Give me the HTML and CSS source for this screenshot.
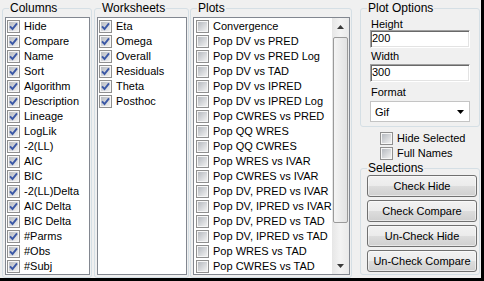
FILE: index.html
```html
<!DOCTYPE html>
<html>
<head>
<meta charset="utf-8">
<link rel="stylesheet" href="styles.css">
</head>
<body>
<div class="window">
  <div class="group col-group g-columns">
    <div class="gtitle">Columns</div>
    <div class="list">
      <div class="row"><span class="cb"><svg viewBox="0 0 9 9"><path d="M1 4.3 L3.5 7 L8 1.3"/></svg></span>Hide</div>
      <div class="row"><span class="cb"><svg viewBox="0 0 9 9"><path d="M1 4.3 L3.5 7 L8 1.3"/></svg></span>Compare</div>
      <div class="row"><span class="cb"><svg viewBox="0 0 9 9"><path d="M1 4.3 L3.5 7 L8 1.3"/></svg></span>Name</div>
      <div class="row"><span class="cb"><svg viewBox="0 0 9 9"><path d="M1 4.3 L3.5 7 L8 1.3"/></svg></span>Sort</div>
      <div class="row"><span class="cb"><svg viewBox="0 0 9 9"><path d="M1 4.3 L3.5 7 L8 1.3"/></svg></span>Algorithm</div>
      <div class="row"><span class="cb"><svg viewBox="0 0 9 9"><path d="M1 4.3 L3.5 7 L8 1.3"/></svg></span>Description</div>
      <div class="row"><span class="cb"><svg viewBox="0 0 9 9"><path d="M1 4.3 L3.5 7 L8 1.3"/></svg></span>Lineage</div>
      <div class="row"><span class="cb"><svg viewBox="0 0 9 9"><path d="M1 4.3 L3.5 7 L8 1.3"/></svg></span>LogLik</div>
      <div class="row"><span class="cb"><svg viewBox="0 0 9 9"><path d="M1 4.3 L3.5 7 L8 1.3"/></svg></span>-2(LL)</div>
      <div class="row"><span class="cb"><svg viewBox="0 0 9 9"><path d="M1 4.3 L3.5 7 L8 1.3"/></svg></span>AIC</div>
      <div class="row"><span class="cb"><svg viewBox="0 0 9 9"><path d="M1 4.3 L3.5 7 L8 1.3"/></svg></span>BIC</div>
      <div class="row"><span class="cb"><svg viewBox="0 0 9 9"><path d="M1 4.3 L3.5 7 L8 1.3"/></svg></span>-2(LL)Delta</div>
      <div class="row"><span class="cb"><svg viewBox="0 0 9 9"><path d="M1 4.3 L3.5 7 L8 1.3"/></svg></span>AIC Delta</div>
      <div class="row"><span class="cb"><svg viewBox="0 0 9 9"><path d="M1 4.3 L3.5 7 L8 1.3"/></svg></span>BIC Delta</div>
      <div class="row"><span class="cb"><svg viewBox="0 0 9 9"><path d="M1 4.3 L3.5 7 L8 1.3"/></svg></span>#Parms</div>
      <div class="row"><span class="cb"><svg viewBox="0 0 9 9"><path d="M1 4.3 L3.5 7 L8 1.3"/></svg></span>#Obs</div>
      <div class="row"><span class="cb"><svg viewBox="0 0 9 9"><path d="M1 4.3 L3.5 7 L8 1.3"/></svg></span>#Subj</div>
    </div>
  </div>

  <div class="group col-group g-ws">
    <div class="gtitle">Worksheets</div>
    <div class="list">
      <div class="row"><span class="cb"><svg viewBox="0 0 9 9"><path d="M1 4.3 L3.5 7 L8 1.3"/></svg></span>Eta</div>
      <div class="row"><span class="cb"><svg viewBox="0 0 9 9"><path d="M1 4.3 L3.5 7 L8 1.3"/></svg></span>Omega</div>
      <div class="row"><span class="cb"><svg viewBox="0 0 9 9"><path d="M1 4.3 L3.5 7 L8 1.3"/></svg></span>Overall</div>
      <div class="row"><span class="cb"><svg viewBox="0 0 9 9"><path d="M1 4.3 L3.5 7 L8 1.3"/></svg></span>Residuals</div>
      <div class="row"><span class="cb"><svg viewBox="0 0 9 9"><path d="M1 4.3 L3.5 7 L8 1.3"/></svg></span>Theta</div>
      <div class="row"><span class="cb"><svg viewBox="0 0 9 9"><path d="M1 4.3 L3.5 7 L8 1.3"/></svg></span>Posthoc</div>
    </div>
  </div>

  <div class="group col-group g-plots">
    <div class="gtitle">Plots</div>
    <div class="list plots-list">
      <div class="items">
        <div class="row"><span class="cb"></span>Convergence</div>
        <div class="row"><span class="cb"></span>Pop DV vs PRED</div>
        <div class="row"><span class="cb"></span>Pop DV vs PRED Log</div>
        <div class="row"><span class="cb"></span>Pop DV vs TAD</div>
        <div class="row"><span class="cb"></span>Pop DV vs IPRED</div>
        <div class="row"><span class="cb"></span>Pop DV vs IPRED Log</div>
        <div class="row"><span class="cb"></span>Pop CWRES vs PRED</div>
        <div class="row"><span class="cb"></span>Pop QQ WRES</div>
        <div class="row"><span class="cb"></span>Pop QQ CWRES</div>
        <div class="row"><span class="cb"></span>Pop WRES vs IVAR</div>
        <div class="row"><span class="cb"></span>Pop CWRES vs IVAR</div>
        <div class="row"><span class="cb"></span>Pop DV, PRED vs IVAR</div>
        <div class="row"><span class="cb"></span>Pop DV, IPRED vs IVAR</div>
        <div class="row"><span class="cb"></span>Pop DV, PRED vs TAD</div>
        <div class="row"><span class="cb"></span>Pop DV, IPRED vs TAD</div>
        <div class="row"><span class="cb"></span>Pop WRES vs TAD</div>
        <div class="row"><span class="cb"></span>Pop CWRES vs TAD</div>
      </div>
      <div class="sb">
        <div class="sb-btn"><svg width="7" height="4" viewBox="0 0 7 4"><path d="M0 4 L3.5 0 L7 4z"/></svg></div>
        <div class="sb-track"><div class="thumb"></div></div>
        <div class="sb-btn"><svg width="7" height="4" viewBox="0 0 7 4"><path d="M0 0 L7 0 L3.5 4z"/></svg></div>
      </div>
    </div>
  </div>

  <div class="side">
    <div class="group g-opts">
      <div class="gtitle">Plot Options</div>
      <div class="lbl lbl-first">Height</div>
      <div class="tb">200</div>
      <div class="lbl lbl-width">Width</div>
      <div class="tb tb-second">300</div>
      <div class="lbl lbl-format">Format</div>
      <div class="dd"><span>Gif</span><svg width="7" height="4" viewBox="0 0 7 4"><path d="M0 0 L7 0 L3.5 4z"/></svg></div>
    </div>
    <div class="checks">
      <div class="row"><span class="cb"></span>Hide Selected</div>
      <div class="row"><span class="cb"></span>Full Names</div>
    </div>
    <div class="group g-sel">
      <div class="gtitle">Selections</div>
      <button class="btn">Check Hide</button>
      <button class="btn">Check Compare</button>
      <button class="btn">Un-Check Hide</button>
      <button class="btn">Un-Check Compare</button>
    </div>
  </div>
</div>
</body>
</html>
```

FILE: styles.css
```css
* { box-sizing: border-box; }

body {
  margin: 0;
  background: #f0f0f0;
  font-family: "Liberation Sans", Arial, sans-serif;
  font-size: 11px;
  color: #000;
}

.window {
  width: 484px;
  height: 281px;
  display: flex;
  align-items: flex-start;
  background: #f0f0f0;
  border-right: 3px solid #000;
  border-bottom: 3px solid #000;
}

.group {
  border: 1px solid #d5dfe5;
  border-radius: 3px;
  margin-top: 8px;
  display: flex;
  flex-direction: column;
}

.gtitle {
  align-self: flex-start;
  margin-top: -8px;
  padding: 0 1px;
  background: #f0f0f0;
  font-size: 12px;
  line-height: 14px;
  height: 14px;
  white-space: nowrap;
}

.col-group {
  height: 270px;
  padding: 0 1px 2px 2px;
}
.col-group .gtitle { margin-left: 4px; }

.g-columns { width: 90px; margin-left: 2px; }
.g-ws { width: 95px; margin-left: 2px; }
.g-plots { width: 162px; margin-left: 1px; }

.list {
  flex: 1;
  margin-top: 2px;
  background: #fff;
  border: 1px solid #828790;
  padding: 1px 0 0 1px;
  overflow: hidden;
}

.row {
  display: flex;
  height: 15px;
  line-height: 15px;
  white-space: nowrap;
}

.cb {
  flex: none;
  width: 13px;
  height: 13px;
  margin: 1px 4px 0 0;
  border: 1px solid #8f8f8f;
  padding: 1px;
  background: linear-gradient(135deg, #b6bac0, #f0f0f0) content-box, #f6f6f6;
}
.cb svg {
  display: block;
  width: 9px;
  height: 9px;
  overflow: visible;
}
.cb svg path {
  fill: none;
  stroke: #3b58a6;
  stroke-width: 1.9;
}

/* Plots list with scrollbar */
.plots-list {
  display: flex;
  padding: 0;
}
.items {
  flex: 1;
  min-width: 0;
  padding: 1px 0 0 2px;
  overflow: hidden;
}
.sb {
  flex: none;
  width: 17px;
  display: flex;
  flex-direction: column;
  background: linear-gradient(to right, #e6e6e6, #f3f3f3 50%, #e9e9e9);
}
.sb-btn {
  height: 17px;
  display: flex;
  align-items: center;
  justify-content: center;
}
.sb-btn svg path { fill: #3a3a3a; }
.sb-track {
  flex: 1;
  padding: 2px 1px 0;
}
.thumb {
  height: 186px;
  border: 1px solid #9a9a9a;
  border-radius: 2px;
  background: linear-gradient(to right, #f4f4f4, #e2e2e2);
}

/* right column */
.side {
  width: 120px;
  margin-left: 8px;
  display: flex;
  flex-direction: column;
}

.g-opts {
  height: 119px;
  padding: 0 0 0 9px;
}
.g-opts .gtitle { margin-left: -3px; }

.lbl {
  line-height: 12px;
  height: 12px;
  margin-left: 1px;
}
.lbl-first { margin-top: 3px; }
.lbl-width { margin-top: 2px; }
.lbl-format { margin-top: 4px; }

.tb {
  width: 100px;
  height: 18px;
  background: #fff;
  border: 1px solid;
  border-color: #a0a0a0 #ffffff #ffffff #a0a0a0;
  box-shadow: inset 1px 1px 0 #696969, inset -1px -1px 0 #e3e3e3;
  padding-left: 1px;
  line-height: 14px;
}
.tb-second { margin-top: 2px; }

.dd {
  width: 100px;
  height: 21px;
  margin-top: 3px;
  background: #fff;
  border: 1px solid #c4c4c4;
  display: flex;
  align-items: center;
  justify-content: space-between;
  padding: 0 5px 0 4px;
}
.dd svg path { fill: #000; }

.checks {
  margin-top: 4px;
  padding-left: 20px;
}

.g-sel {
  margin-top: 7px;
  padding: 0 0 2px 6px;
}
.g-sel .gtitle { margin-left: 0; }

.btn {
  display: block;
  width: 110px;
  height: 22px;
  margin: 3px 0 0 0;
  padding: 0;
  border: 1px solid #707070;
  border-radius: 3px;
  background: linear-gradient(#f2f2f2, #ebebeb 50%, #dddddd 50%, #cfcfcf);
  box-shadow: inset 0 0 0 1px rgba(255, 255, 255, 0.5);
  font-family: "Liberation Sans", Arial, sans-serif;
  font-size: 11px;
  color: #000;
}
.btn:first-of-type { margin-top: 0; }
```
